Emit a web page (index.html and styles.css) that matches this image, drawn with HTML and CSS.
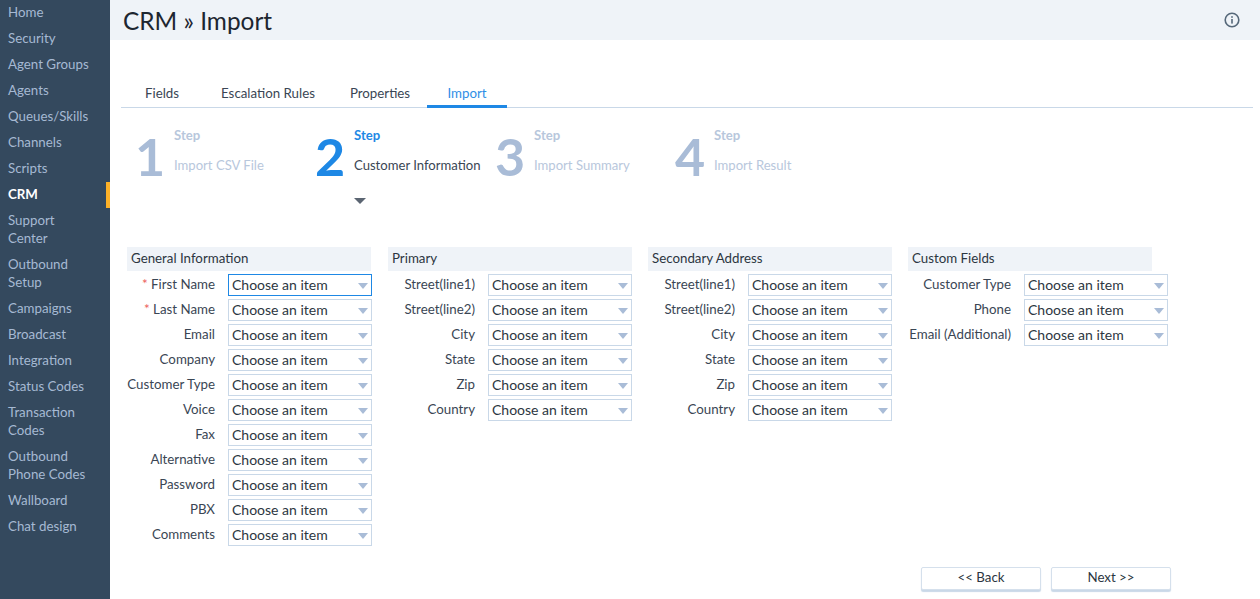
FILE: index.html
```html
<!DOCTYPE html>
<html>
    <head>
        <meta charset="UTF-8">
        <title>CRM Import</title>
        <link rel="stylesheet" href="styles.css">
    </head>
    <body>
        <div class="page-container">
            <nav class="sidebar">
                <a>Home</a>
                <a>Security</a>
                <a>Agent Groups</a>
                <a>Agents</a>
                <a>Queues/Skills</a>
                <a>Channels</a>
                <a>Scripts</a>
                <a class="active">CRM</a>
                <a>Support<br>Center</a>
                <a>Outbound<br>Setup</a>
                <a>Campaigns</a>
                <a>Broadcast</a>
                <a>Integration</a>
                <a>Status Codes</a>
                <a>Transaction<br>Codes</a>
                <a>Outbound<br>Phone Codes</a>
                <a>Wallboard</a>
                <a>Chat design</a>
            </nav>
            <main class="main">
                <header class="topbar">
                    <h1>CRM &raquo; Import</h1>
                    <svg class="info" width="16" height="16" viewBox="0 0 16 16">
                        <circle cx="8" cy="8" r="6.8" fill="none" stroke="#56687a" stroke-width="1.6"/>
                        <rect x="7.2" y="7" width="1.6" height="4.6" fill="#56687a"/>
                        <rect x="7.2" y="4.2" width="1.6" height="1.6" fill="#56687a"/>
                    </svg>
                </header>
                <div class="tabs">
                    <a class="tab tab-fields">Fields</a>
                    <a class="tab tab-rules">Escalation Rules</a>
                    <a class="tab tab-props">Properties</a>
                    <a class="tab tab-import">Import</a>
                </div>
                <div class="steps">
                    <div class="step">
                        <span class="num">1</span>
                        <div class="step-text"><b>Step</b><span>Import CSV File</span></div>
                    </div>
                    <div class="step current">
                        <span class="num">2</span>
                        <div class="step-text"><b>Step</b><span>Customer Information</span><i class="marker"></i></div>
                    </div>
                    <div class="step">
                        <span class="num">3</span>
                        <div class="step-text"><b>Step</b><span>Import Summary</span></div>
                    </div>
                    <div class="step">
                        <span class="num">4</span>
                        <div class="step-text"><b>Step</b><span>Import Result</span></div>
                    </div>
                </div>
                <form class="columns">
                    <section class="col col-general">
                        <h2>General Information</h2>
                        <div class="row"><label><em>*</em> First Name</label><div class="select focused">Choose an item</div></div>
                        <div class="row"><label><em>*</em> Last Name</label><div class="select">Choose an item</div></div>
                        <div class="row"><label>Email</label><div class="select">Choose an item</div></div>
                        <div class="row"><label>Company</label><div class="select">Choose an item</div></div>
                        <div class="row"><label>Customer Type</label><div class="select">Choose an item</div></div>
                        <div class="row"><label>Voice</label><div class="select">Choose an item</div></div>
                        <div class="row"><label>Fax</label><div class="select">Choose an item</div></div>
                        <div class="row"><label>Alternative</label><div class="select">Choose an item</div></div>
                        <div class="row"><label>Password</label><div class="select">Choose an item</div></div>
                        <div class="row"><label>PBX</label><div class="select">Choose an item</div></div>
                        <div class="row"><label>Comments</label><div class="select">Choose an item</div></div>
                    </section>
                    <section class="col">
                        <h2>Primary</h2>
                        <div class="row"><label>Street(line1)</label><div class="select">Choose an item</div></div>
                        <div class="row"><label>Street(line2)</label><div class="select">Choose an item</div></div>
                        <div class="row"><label>City</label><div class="select">Choose an item</div></div>
                        <div class="row"><label>State</label><div class="select">Choose an item</div></div>
                        <div class="row"><label>Zip</label><div class="select">Choose an item</div></div>
                        <div class="row"><label>Country</label><div class="select">Choose an item</div></div>
                    </section>
                    <section class="col">
                        <h2>Secondary Address</h2>
                        <div class="row"><label>Street(line1)</label><div class="select">Choose an item</div></div>
                        <div class="row"><label>Street(line2)</label><div class="select">Choose an item</div></div>
                        <div class="row"><label>City</label><div class="select">Choose an item</div></div>
                        <div class="row"><label>State</label><div class="select">Choose an item</div></div>
                        <div class="row"><label>Zip</label><div class="select">Choose an item</div></div>
                        <div class="row"><label>Country</label><div class="select">Choose an item</div></div>
                    </section>
                    <section class="col col-custom">
                        <h2>Custom Fields</h2>
                        <div class="row"><label>Customer Type</label><div class="select">Choose an item</div></div>
                        <div class="row"><label>Phone</label><div class="select">Choose an item</div></div>
                        <div class="row"><label>Email (Additional)</label><div class="select">Choose an item</div></div>
                    </section>
                </form>
                <div class="buttons">
                    <button type="button">&lt;&lt; Back</button>
                    <button type="button">Next &gt;&gt;</button>
                </div>
            </main>
        </div>
    </body>
</html>
```

FILE: styles.css
```css
*, *::before, *::after {
    box-sizing: border-box;
}
html, body {
    margin: 0;
    padding: 0;
    height: 100%;
    overflow: hidden;
}
body {
    font-family: Lato, sans-serif;
    font-size: 13.3px;
    color: #3a4654;
    background-color: #fff;
}
.page-container {
    display: flex;
    height: 599px;
}

/* left menu */
.sidebar {
    flex: 0 0 110px;
    display: flex;
    flex-direction: column;
    padding-top: 3px;
    background-color: #34495e;
}
.sidebar a {
    padding: 0 8px;
    margin-bottom: 8px;
    line-height: 18px;
    color: #a6b9d3;
    font-size: 13.3px;
}
.sidebar a.active {
    color: #fff;
    font-weight: 700;
    position: relative;
}
.sidebar a.active::after {
    content: "";
    position: absolute;
    top: -3px;
    right: 0;
    width: 4px;
    height: 26px;
    background-color: #fdb128;
}

.main {
    flex: 1;
    min-width: 0;
}
.topbar {
    display: flex;
    align-items: center;
    justify-content: space-between;
    height: 40px;
    padding: 0 20px 0 13px;
    background-color: #eff3f8;
}
.topbar h1 {
    margin: 0;
    font-size: 24.4px;
    font-weight: 400;
    color: #1d2630;
}

/* tabs */
.tabs {
    display: flex;
    height: 29px;
    margin: 39px 7px 0 11px;
    border-bottom: 1px solid #c9d8e8;
}
.tab {
    height: 29px;
    line-height: 28px;
    text-align: center;
    color: #3a4654;
}
.tab-fields {
    width: 82px;
}
.tab-rules {
    width: 130px;
}
.tab-props {
    width: 94px;
}
.tab-import {
    width: 80px;
    color: #2f8fe6;
    border-bottom: 3px solid #1e88e5;
}

/* wizard steps */
.steps {
    display: flex;
    height: 139px;
    padding-left: 25px;
}
.step {
    display: flex;
    width: 180px;
}
.num {
    width: 39px;
    padding-top: 18px;
    font-size: 52px;
    line-height: 60px;
    font-weight: 700;
    color: #a9bcd7;
}
.step-text {
    display: flex;
    flex-direction: column;
    padding-top: 18px;
    font-size: 13.1px;
    color: #b8c7dc;
    white-space: nowrap;
}
.step-text b {
    line-height: 18px;
}
.step-text span {
    margin-top: 12px;
    line-height: 18px;
}
.current .num, .current b {
    color: #1e88e5;
}
.current span {
    color: #3a4654;
}
.marker {
    width: 0;
    margin-top: 24px;
    border-top: 6px solid #5b6572;
    border-left: 6px solid transparent;
    border-right: 6px solid transparent;
}

/* mapping columns */
.columns {
    display: flex;
    gap: 16px;
    padding-left: 17px;
}
.col {
    width: 244px;
}
.col h2 {
    margin: 0 0 3px 0;
    height: 24px;
    padding-left: 4px;
    font-size: 13.3px;
    font-weight: 400;
    line-height: 22px;
    color: #2c3641;
    background-color: #eff3f8;
}
.row {
    display: flex;
    align-items: center;
    gap: 13px;
    height: 22px;
    margin-bottom: 3px;
}
.row label {
    flex: 0 0 87px;
    text-align: right;
    white-space: nowrap;
    line-height: 18px;
    margin-top: -3px;
}
.col-general {
    width: 245px;
}
.col-general h2 {
    margin-right: 1px;
}
.col-general .row label {
    flex-basis: 88px;
}
.col-custom .row label {
    flex-basis: 103px;
}
.row label em {
    font-style: normal;
    color: #ec5a5a;
}
.select {
    position: relative;
    flex: 0 0 144px;
    height: 22px;
    padding-left: 3px;
    font-size: 14px;
    line-height: 20px;
    color: #2c3641;
    background-color: #fff;
    border: 1px solid #c9d8e8;
}
.select::after {
    content: "";
    position: absolute;
    top: 8px;
    right: 3px;
    border-top: 6px solid #a9bcd7;
    border-left: 5px solid transparent;
    border-right: 5px solid transparent;
}
.select.focused {
    border-color: #1e88e5;
}

/* back / next */
.buttons {
    position: absolute;
    top: 567px;
    left: 921px;
    display: flex;
    gap: 10px;
}
.buttons button {
    width: 120px;
    height: 23px;
    padding: 0 0 3px 0;
    font-family: inherit;
    font-size: 13.3px;
    color: #2c3641;
    background-color: #fff;
    border: 1px solid #d5e0ec;
    border-radius: 2px;
    box-shadow: 0 2px 1px #c9d8e8;
}
```
